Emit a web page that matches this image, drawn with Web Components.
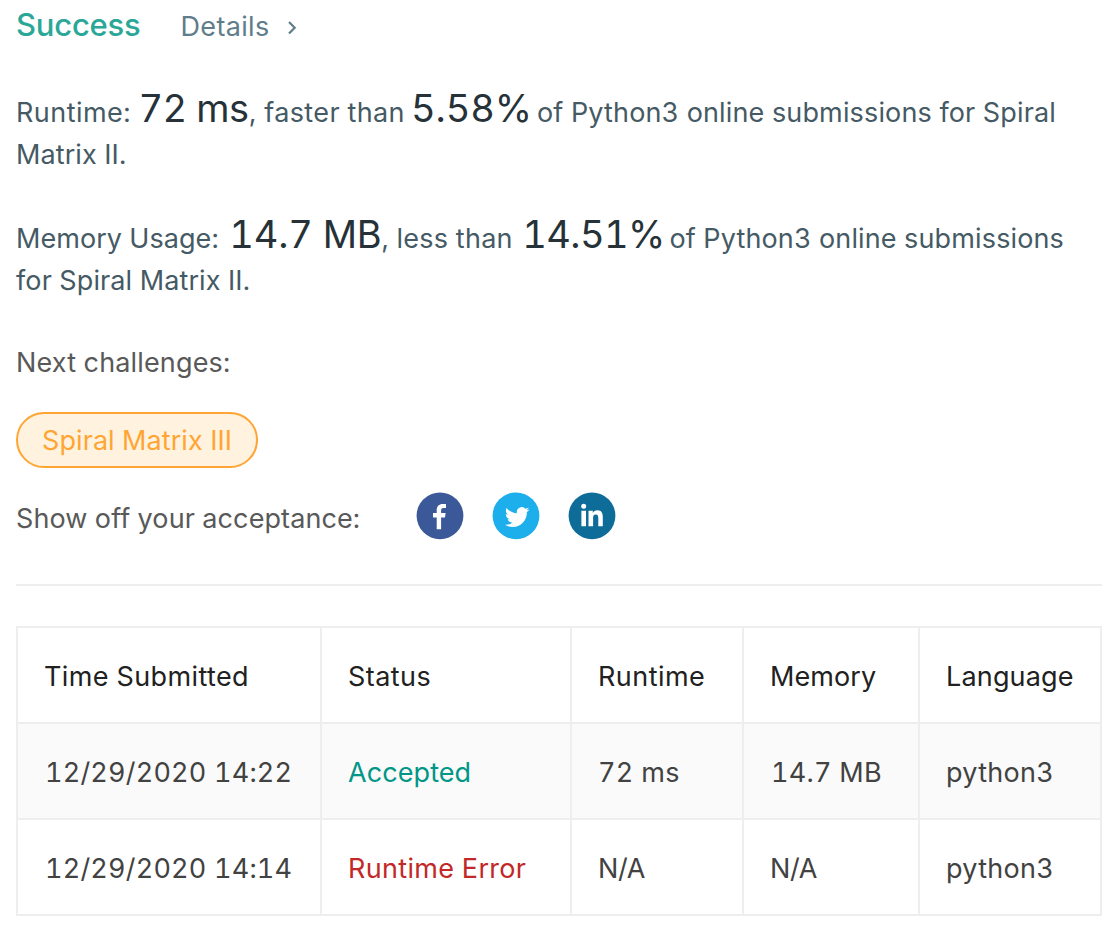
<!DOCTYPE html>
<html lang="en">
<head>
<meta charset="utf-8">
<title>Submission result</title>
<style>
html,body{margin:0;background:#fff}
body{font:400 27px/41px Inter,"Liberation Sans",sans-serif;font-feature-settings:"tnum";color:#455a64}
</style>
</head>
<body>
<submission-page></submission-page>
<script>
const define = (name, html, setup) => customElements.define(name, class extends HTMLElement {
  connectedCallback() {
    if (this.shadowRoot) return;
    const root = this.attachShadow({ mode: 'open' });
    const t = document.createElement('template');
    t.innerHTML = html;
    root.append(t.content.cloneNode(true));
    if (setup) setup(this, root);
  }
});

/* A run of text with its own tracking (ls) and advance width (w). */
define('text-run', `<style>
:host{display:block;flex:none;white-space:pre;padding-top:1px}
:host([big]){font-size:38px;line-height:32px;color:#263238}
</style><slot></slot>`, el => {
  el.style.letterSpacing = (el.getAttribute('ls') || 0) + 'px';
  if (el.hasAttribute('w')) el.style.width = el.getAttribute('w') + 'px';
});

define('text-line', `<style>
:host{display:flex;align-items:baseline;height:42px}
</style><slot></slot>`);

define('result-header', `<style>
:host{display:flex;align-items:baseline;height:42px;color:#607d8b}
.ok{color:#2ba798;font-size:31px;line-height:37px;font-weight:500;width:164.5px}
svg{display:block;align-self:flex-start;margin:16px 0 0 16px}
</style>
<text-run class="ok" ls="-.22">Success</text-run>
<text-run ls=".33" w="89">Details</text-run>
<svg width="12" height="14" viewBox="0 0 12 14" fill="none" stroke="currentColor" stroke-width="2.2"><path d="M3 1 8.7 6.8 3 12.6"/></svg>`);

define('challenge-tag', `<style>
:host{display:block;box-sizing:border-box;width:242px;height:56px;border:2px solid #ffa534;border-radius:28px;background:#fff3e0;color:#ffa534;padding:5px 0 0 24px}
</style><slot></slot>`);

define('share-icon', `<style>
:host{display:block;width:48px;height:48px}
svg{display:block}
</style><svg width="48" height="48" viewBox="0 0 48 48" fill="#fff"><circle cx="24" cy="23.8" r="23.4"/><path/></svg>`, (el, root) => {
  const icons = {
    facebook: ['#3b5998', 'M20.7 37.3V25.4H17V21.1H20.7V18C20.7 14 23 11.9 26.8 11.9C28.2 11.9 29.4 12 30 12.1V16H27.6C25.6 16 25.1 17 25.1 18.4V21.1H29.6L29 25.4H25.1V37.3Z'],
    twitter: ['#1daeec', 'M23.953 4.57a10 10 0 0 1-2.825.775 4.958 4.958 0 0 0 2.163-2.723 10 10 0 0 1-3.127 1.184 4.92 4.92 0 0 0-8.384 4.482C7.69 8.095 4.067 6.13 1.64 3.162a4.822 4.822 0 0 0-.666 2.475c0 1.71.87 3.213 2.188 4.096a4.904 4.904 0 0 1-2.228-.616v.06a4.923 4.923 0 0 0 3.946 4.827 4.996 4.996 0 0 1-2.212.085 4.936 4.936 0 0 0 4.604 3.417 9.867 9.867 0 0 1-6.102 2.105c-.39 0-.779-.023-1.17-.067a13.995 13.995 0 0 0 7.557 2.209c9.053 0 13.998-7.496 13.998-13.985 0-.21 0-.42-.015-.63a9.935 9.935 0 0 0 2.46-2.548z', 'translate(12.9 12.8) scale(1.02)'],
    linkedin: ['#0e6c99', 'M15.7 11.7A2.5 2.5 0 1 1 15.7 16.7A2.5 2.5 0 1 1 15.7 11.7ZM13.4 18.7H18V34.3H13.4ZM20.5 18.7H24.8V20.9C25.6 19.3 27.3 18.3 29.3 18.3C33.6 18.3 34.8 21.2 34.8 25.1V34.3H30.3V26.3C30.3 24.2 30 22.4 27.8 22.4C25.5 22.4 25.1 24 25.1 26V34.3H20.5Z']
  };
  const [fill, d, transform] = icons[el.getAttribute('name')];
  root.querySelector('circle').setAttribute('fill', fill);
  const path = root.querySelector('path');
  path.setAttribute('d', d);
  if (transform) path.setAttribute('transform', transform);
});

define('share-row', `<style>
:host{display:flex;height:48px;gap:28px}
text-run{width:372px;padding-top:6px;box-sizing:border-box}
</style>
<text-run ls=".1">Show off your acceptance:</text-run>
<share-icon name="facebook"></share-icon><share-icon name="twitter"></share-icon><share-icon name="linkedin"></share-icon>`);

define('table-cell', `<style>
:host{display:block;box-sizing:border-box;background:#fff;color:#424242;padding:27px 0 0 26px}
:host([head]){color:#212121}
:host([alt]){background:#fafafa}
:host([digits]){padding-left:27px}
:host([status=accepted]){color:#009688}
:host([status=error]){color:#c22828}
</style><slot></slot>`);

define('submission-table', `<style>
:host{display:grid;grid-template-columns:302px 248px 170px 174px 180px;grid-auto-rows:94px;gap:2px;padding:2px;background:#eee}
</style>
<table-cell head><text-run ls=".38">Time Submitted</text-run></table-cell>
<table-cell head><text-run ls=".45">Status</text-run></table-cell>
<table-cell head><text-run ls=".45">Runtime</text-run></table-cell>
<table-cell head><text-run ls=".08">Memory</text-run></table-cell>
<table-cell head><text-run ls=".17">Language</text-run></table-cell>
<table-cell alt digits><text-run ls=".2">12/29/2020 14:22</text-run></table-cell>
<table-cell alt status="accepted"><text-run ls=".08">Accepted</text-run></table-cell>
<table-cell alt><text-run ls=".35">72 ms</text-run></table-cell>
<table-cell alt digits><text-run ls=".25">14.7 MB</text-run></table-cell>
<table-cell alt><text-run ls=".3">python3</text-run></table-cell>
<table-cell digits><text-run ls=".2">12/29/2020 14:14</text-run></table-cell>
<table-cell status="error"><text-run ls=".32">Runtime Error</text-run></table-cell>
<table-cell><text-run ls="-.3">N/A</text-run></table-cell>
<table-cell><text-run ls="-.3">N/A</text-run></table-cell>
<table-cell><text-run ls=".3">python3</text-run></table-cell>`);

define('submission-page', `<style>
:host{display:block;box-sizing:border-box;width:1110px;height:936px;padding:5px 8px 0 16px;overflow:hidden}
.runtime{margin-top:44px}
.memory{margin-top:42px}
.grey{color:#595959}
.next{margin-top:40px}
challenge-tag{margin-top:29px}
share-row{margin-top:24px}
hr{border:0;height:2px;background:#eee;margin:44px 0 40px}
</style>
<result-header></result-header>
<section class="runtime">
<text-line><text-run w="122.5" ls=".45">Runtime:</text-run><text-run big w="110.5" ls="-.55">72 ms</text-run><text-run w="162" ls=".37">, faster than</text-run><text-run big w="126" ls="-.1">5.58%</text-run><text-run ls=".155">of Python3 online submissions for Spiral</text-run></text-line>
<text-line><text-run ls=".1">Matrix II.</text-run></text-line>
</section>
<section class="memory">
<text-line><text-run w="213.3" ls=".05">Memory Usage:</text-run><text-run big w="152.2" ls="-.2">14.7 MB</text-run><text-run w="140.8" ls=".26">, less than</text-run><text-run big w="147.2" ls="-.6">14.51%</text-run><text-run ls=".14">of Python3 online submissions</text-run></text-line>
<text-line><text-run ls=".12">for Spiral Matrix II.</text-run></text-line>
</section>
<text-line class="grey next"><text-run ls=".15">Next challenges:</text-run></text-line>
<challenge-tag><text-run ls=".08">Spiral Matrix III</text-run></challenge-tag>
<share-row class="grey"></share-row>
<hr>
<submission-table></submission-table>`);
</script>
</body>
</html>
